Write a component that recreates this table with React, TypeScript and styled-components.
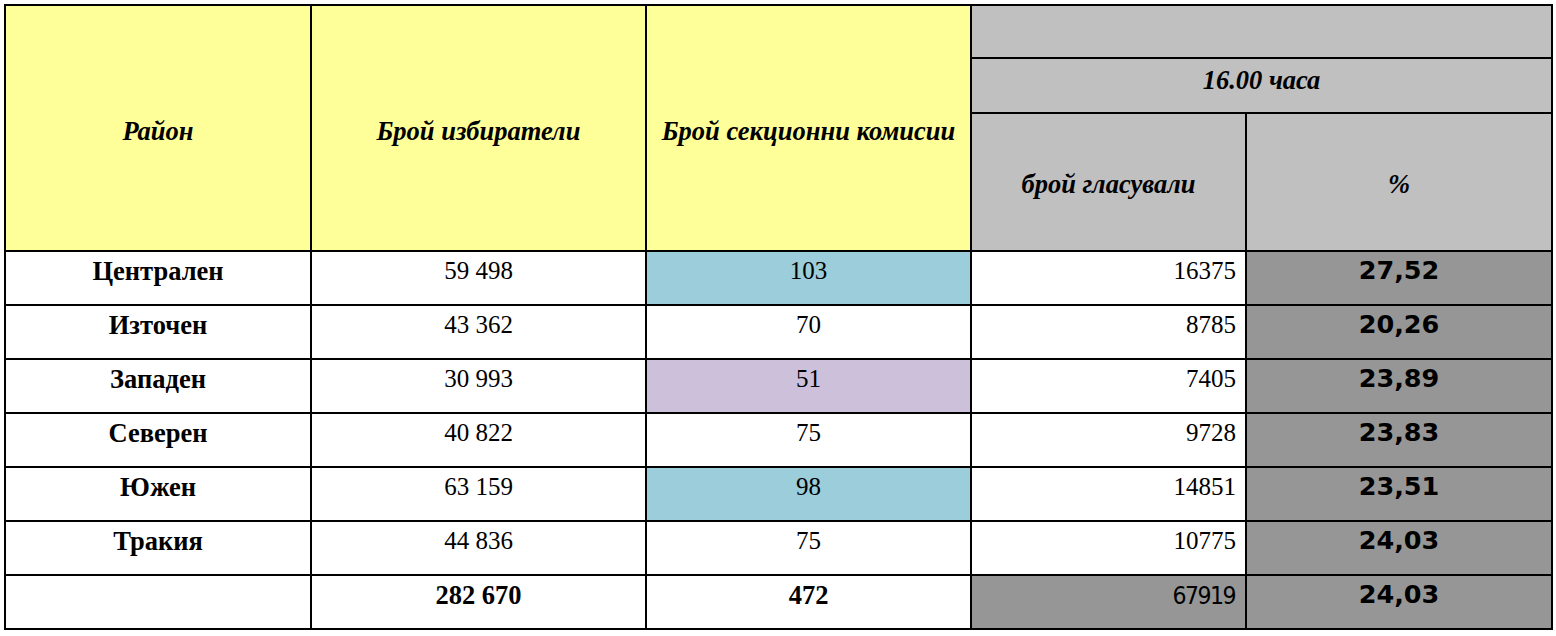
import React from "react";
import styled, { createGlobalStyle } from "styled-components";

const Global = createGlobalStyle`
  html, body { margin: 0; padding: 0; background: #ffffff; }
  body { font-family: "Liberation Serif", "Times New Roman", serif; color: #000; }
`;

const Page = styled.div`
  padding: 4px;
`;

const Grid = styled.div`
  display: grid;
  width: max-content;
  grid-template-columns: 304px 333px 323px 273px 304px;
  grid-template-rows: 51px 53px 136px repeat(7, 52px);
  gap: 2px;
  padding: 2px;
  background: #000;
`;

type Tone = "white" | "yellow" | "gray" | "dark" | "blue" | "purple";
const tones: Record<Tone, string> = {
  white: "#ffffff",
  yellow: "#ffff99",
  gray: "#c0c0c0",
  dark: "#969696",
  blue: "#9bcddb",
  purple: "#ccc0da",
};

const Cell = styled.div<{ $tone?: Tone; $align?: "center" | "right" }>`
  background: ${(p) => tones[p.$tone ?? "white"]};
  display: flex;
  align-items: flex-start;
  justify-content: ${(p) => (p.$align === "right" ? "flex-end" : "center")};
  padding: 5px ${(p) => (p.$align === "right" ? "9px" : "0")} 0 0;
  font-size: 25px;
  line-height: 1.15;
  white-space: nowrap;
`;

const HeadCell = styled.div<{ $tone: Tone; $shift?: number }>`
  background: ${(p) => tones[p.$tone]};
  display: flex;
  align-items: center;
  justify-content: center;
  padding-top: ${(p) => Math.max(0, p.$shift ?? 0)}px;
  padding-bottom: ${(p) => Math.max(0, -(p.$shift ?? 0))}px;
  font-size: 26.5px;
  line-height: 1.15;
  font-weight: bold;
  font-style: italic;
  white-space: nowrap;
`;

const Name = styled.span`
  font-weight: bold;
  font-size: 26.5px;
  margin-top: -1px;
`;

const Pct = styled.span`
  font-family: "DejaVu Sans", "Verdana", sans-serif;
  font-weight: bold;
  font-size: 25.5px;
  line-height: 1.164;
  margin-top: -1px;
`;

const Narrow = styled.span`
  font-family: "DejaVu Sans Condensed", "DejaVu Sans", sans-serif;
  font-stretch: condensed;
  font-size: 24.5px;
  letter-spacing: -1.5px;
  line-height: 1.164;
  margin: 1px 1px 0 0;
`;

const rows: {
  name: string;
  voters: string;
  sections: string;
  secTone: Tone;
  voted: string;
  pct: string;
}[] = [
  { name: "Централен", voters: "59 498", sections: "103", secTone: "blue", voted: "16375", pct: "27,52" },
  { name: "Източен", voters: "43 362", sections: "70", secTone: "white", voted: "8785", pct: "20,26" },
  { name: "Западен", voters: "30 993", sections: "51", secTone: "purple", voted: "7405", pct: "23,89" },
  { name: "Северен", voters: "40 822", sections: "75", secTone: "white", voted: "9728", pct: "23,83" },
  { name: "Южен", voters: "63 159", sections: "98", secTone: "blue", voted: "14851", pct: "23,51" },
  { name: "Тракия", voters: "44 836", sections: "75", secTone: "white", voted: "10775", pct: "24,03" },
];

export default function App() {
  return (
    <Page>
      <Global />
      <Grid>
        <HeadCell $tone="yellow" $shift={6} style={{ gridRow: "1 / 4", gridColumn: "1" }}>
          Район
        </HeadCell>
        <HeadCell $tone="yellow" $shift={6} style={{ gridRow: "1 / 4", gridColumn: "2" }}>
          Брой избиратели
        </HeadCell>
        <HeadCell $tone="yellow" $shift={6} style={{ gridRow: "1 / 4", gridColumn: "3" }}>
          Брой секционни комисии
        </HeadCell>
        <HeadCell $tone="gray" style={{ gridRow: "1", gridColumn: "4 / 6" }} />
        <HeadCell $tone="gray" $shift={-10} style={{ gridRow: "2", gridColumn: "4 / 6" }}>
          16.00 часа
        </HeadCell>
        <HeadCell $tone="gray" $shift={4}>брой гласували</HeadCell>
        <HeadCell $tone="gray" $shift={4}>%</HeadCell>

        {rows.map((r) => (
          <React.Fragment key={r.name}>
            <Cell>
              <Name>{r.name}</Name>
            </Cell>
            <Cell>{r.voters}</Cell>
            <Cell $tone={r.secTone}>{r.sections}</Cell>
            <Cell $align="right">{r.voted}</Cell>
            <Cell $tone="dark">
              <Pct>{r.pct}</Pct>
            </Cell>
          </React.Fragment>
        ))}

        <Cell />
        <Cell>
          <Name>282 670</Name>
        </Cell>
        <Cell>
          <Name>472</Name>
        </Cell>
        <Cell $tone="dark" $align="right">
          <Narrow>67919</Narrow>
        </Cell>
        <Cell $tone="dark">
          <Pct>24,03</Pct>
        </Cell>
      </Grid>
    </Page>
  );
}
